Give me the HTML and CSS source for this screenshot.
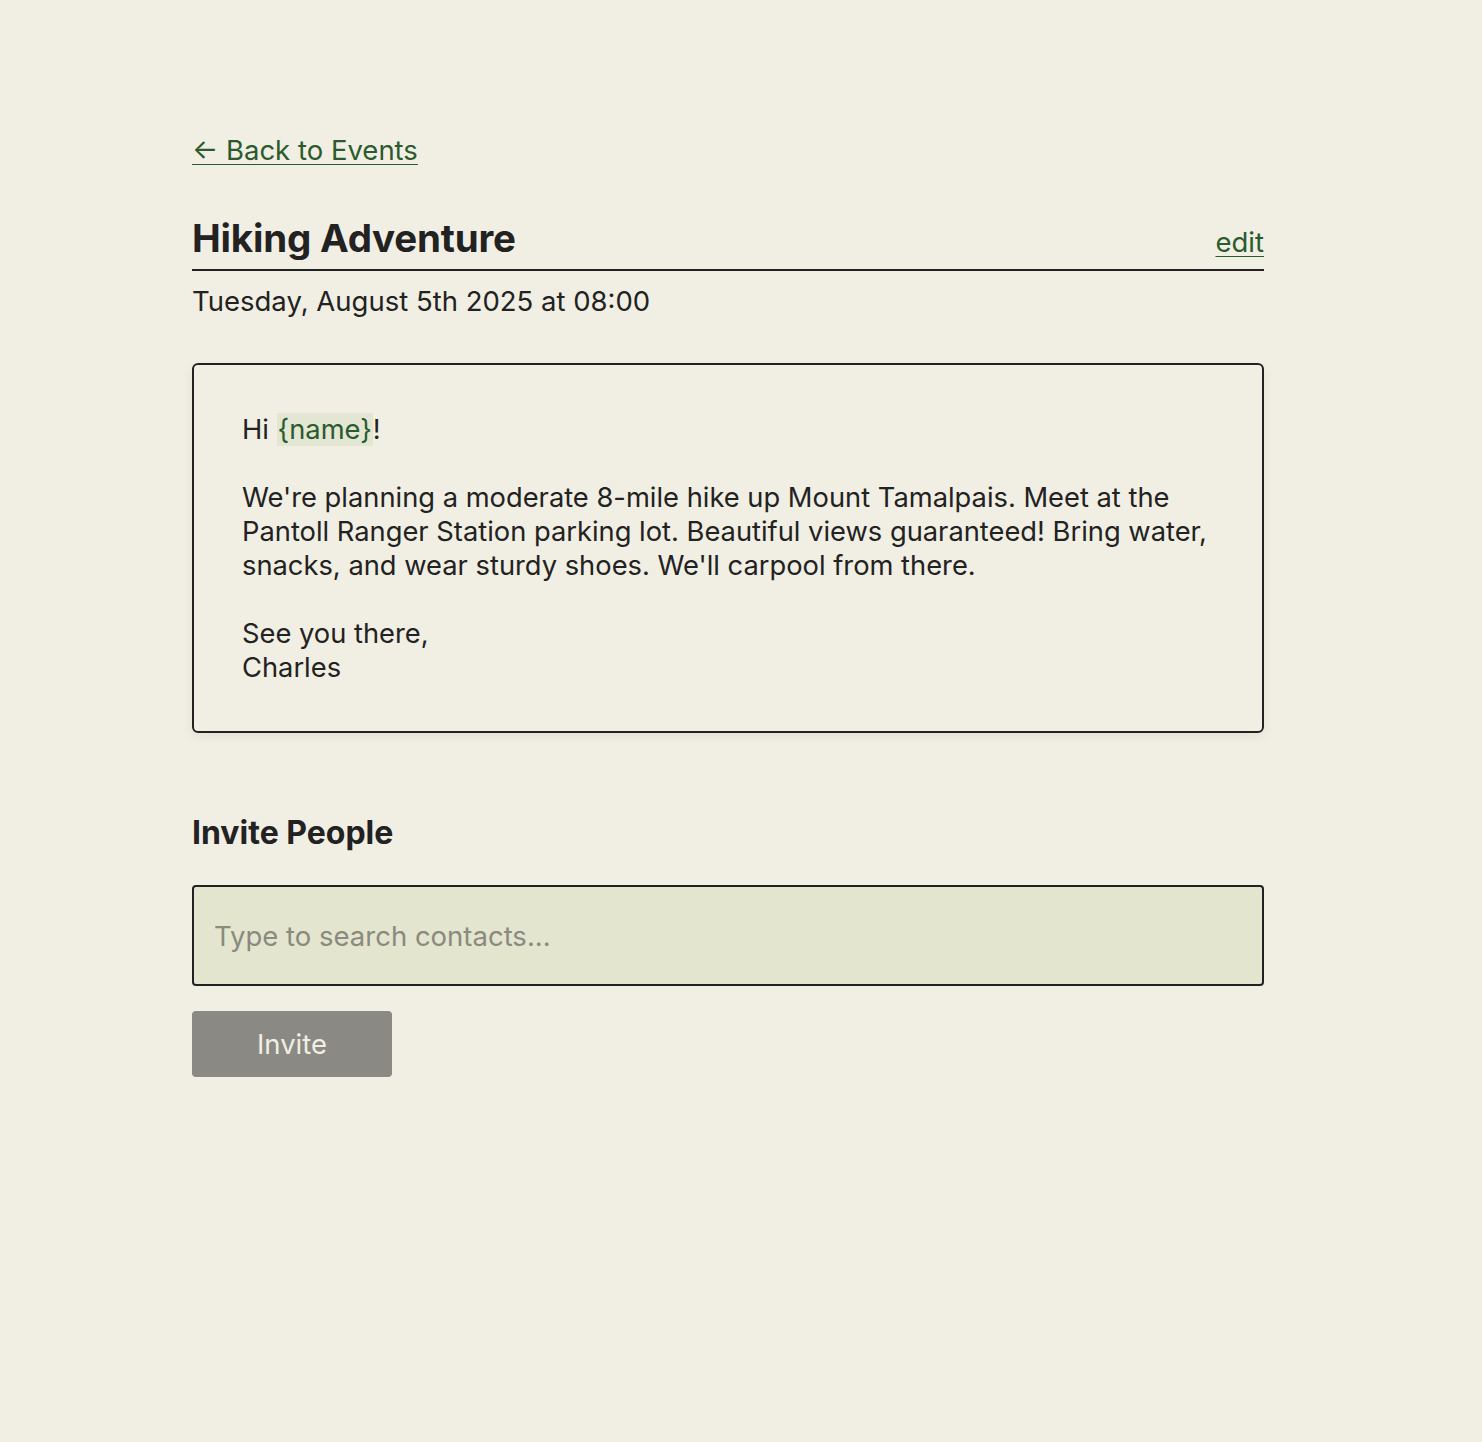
FILE: index.html
```html
<!DOCTYPE html>
<html lang="en">
<head>
    <meta charset="UTF-8">
    <meta name="viewport" content="width=device-width, initial-scale=1.0">
    <title>Hiking Adventure</title>
    <link rel="stylesheet" href="styles.css">
</head>
<body>
    <div class="container">
        <a class="back-link" href="#">&larr; Back to Events</a>

        <div class="event-header">
            <h1>Hiking Adventure</h1>
            <a class="edit-link" href="#">edit</a>
        </div>
        <p class="event-date">Tuesday, August 5th 2025 at 08:00</p>

        <div class="message-card">
            <p>Hi <span class="placeholder-tag">{name}</span>!</p>
            <p>We're planning a moderate 8-mile hike up Mount Tamalpais. Meet at the Pantoll Ranger Station parking lot. Beautiful views guaranteed! Bring water, snacks, and wear sturdy shoes. We'll carpool from there.</p>
            <p>See you there,<br>Charles</p>
        </div>

        <h2>Invite People</h2>
        <input type="text" class="contact-search" placeholder="Type to search contacts..." autofocus>
        <button class="invite-btn" disabled>Invite</button>
    </div>
</body>
</html>
```

FILE: styles.css
```css
body {
    font-family: Inter, "Noto Sans", sans-serif;
    margin: 0;
    padding: 0;
    background-color: #f1efe3;
    color: #222;
}
.container {
    width: 1072px;
    margin: 0 0 0 192px;
    padding: 133px 0 60px;
}
a {
    color: #2b5a2e;
}
.back-link {
    display: inline-block;
    font-size: 27.5px;
    line-height: 34px;
    text-decoration: underline;
    text-underline-offset: 4px;
    text-decoration-thickness: 1px;
}
.event-header {
    display: flex;
    justify-content: space-between;
    align-items: baseline;
    margin-top: 48px;
    border-bottom: 2px solid #222;
    padding-bottom: 8px;
}
h1 {
    font-size: 38.5px;
    font-weight: 700;
    margin: 0;
    line-height: 46px;
    letter-spacing: -0.2px;
}
.edit-link {
    font-size: 27.5px;
    text-underline-offset: 4px;
    text-decoration-thickness: 1px;
}
.event-date {
    font-size: 27.5px;
    line-height: 34px;
    margin: 13px 0 0;
}
.message-card {
    margin-top: 45px;
    border: 2px solid #222;
    border-radius: 6px;
    padding: 48px 40px 46px 48px;
    font-size: 27.3px;
    line-height: 34px;
    box-shadow: 0 4px 12px rgba(0, 0, 0, 0.06);
}
.message-card p {
    margin: 0 0 34px;
}
.message-card p:last-child {
    margin-bottom: 0;
}
.placeholder-tag {
    color: #2b5a2e;
    background-color: #e2e6d2;
    padding: 0 1px;
}
h2 {
    font-size: 32px;
    font-weight: 700;
    line-height: 36px;
    margin: 82px 0 34px;
}
.contact-search {
    display: block;
    width: 100%;
    height: 101px;
    padding: 0 20px;
    font-family: inherit;
    font-size: 27.5px;
    color: #222;
    background-color: #e3e5cf;
    border: 2px solid #222;
    border-radius: 4px;
    box-sizing: border-box;
    outline: none;
}
.contact-search::placeholder {
    color: #8a8a7e;
}
.invite-btn {
    margin-top: 25px;
    width: 200px;
    height: 66px;
    border: none;
    border-radius: 4px;
    background-color: #8a8984;
    color: #f1efe3;
    font-family: inherit;
    font-size: 27.5px;
}
```
